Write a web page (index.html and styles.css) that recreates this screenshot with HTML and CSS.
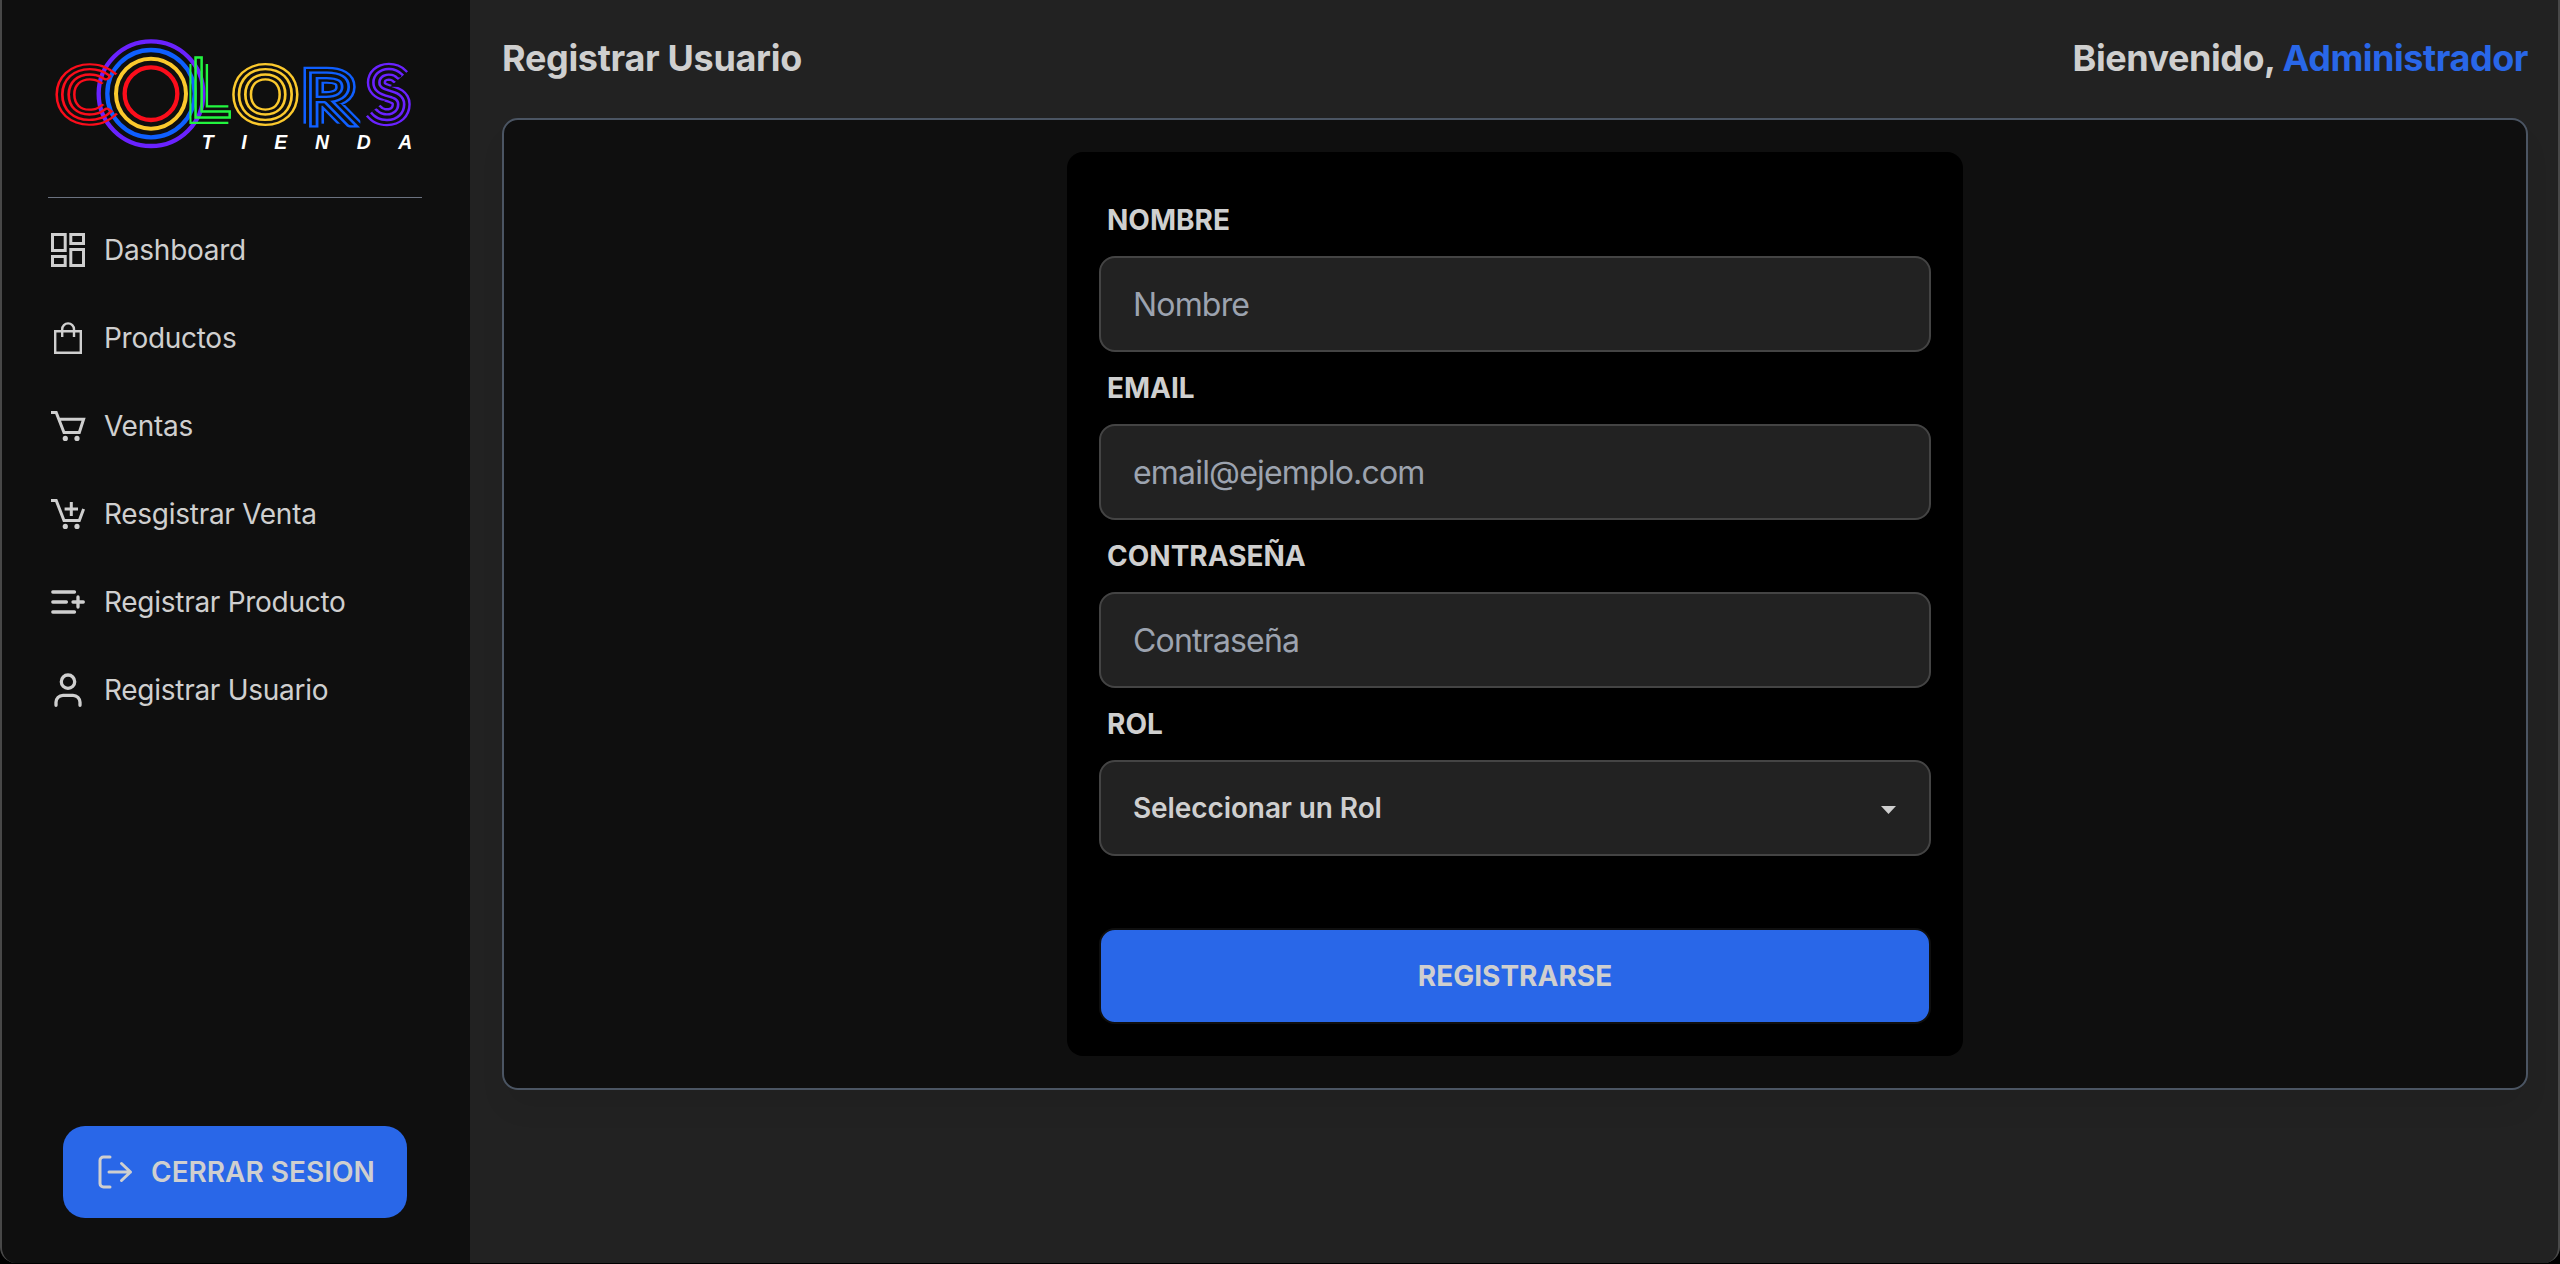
FILE: index.html
```html
<!DOCTYPE html>
<html lang="es">
<head>
<meta charset="utf-8">
<title>Registrar Usuario</title>
<link rel="stylesheet" href="styles.css">
</head>
<body>
<div class="window">
  <aside class="sidebar">
    <svg class="logo" viewBox="144 96 1122 369" role="img" aria-label="Colors Tienda">
      <defs>
        <!-- Each mask cuts the thick stroke of a letter into four parallel stripes -->
        <mask id="stripes-c" maskUnits="userSpaceOnUse" x="100" y="90" width="1200" height="380">
          <rect class="keep" x="100" y="90" width="1200" height="380"/>
          <g class="glyph" transform="translate(256 351) scale(1.16 1)"><text class="cut wide">C</text><text class="add">C</text><text class="cut thin">C</text></g>
          <polygon class="hide" points="264,281 400,188 400,374"/>
        </mask>
        <mask id="stripes-l" maskUnits="userSpaceOnUse" x="100" y="90" width="1200" height="380">
          <rect class="keep" x="568" y="192" width="117" height="180"/>
          <g class="glyph glyph-l" transform="translate(567 346)"><text class="cut wide">L</text><text class="add">L</text><text class="cut thin">L</text></g>
        </mask>
        <mask id="stripes-o" maskUnits="userSpaceOnUse" x="100" y="90" width="1200" height="380">
          <rect class="keep" x="100" y="90" width="1200" height="380"/>
          <g class="glyph" transform="translate(796 351) scale(1.14 1)"><text class="cut wide">O</text><text class="add">O</text><text class="cut thin">O</text></g>
        </mask>
        <mask id="stripes-r" maskUnits="userSpaceOnUse" x="100" y="90" width="1200" height="380">
          <rect class="keep" x="909" y="180" width="172" height="191"/>
          <g class="glyph glyph-r" transform="translate(985 371) scale(1.2 1)"><text class="cut wide">R</text><text class="add">R</text><text class="cut thin">R</text></g>
        </mask>
        <mask id="stripes-s" maskUnits="userSpaceOnUse" x="100" y="90" width="1200" height="380">
          <rect class="keep" x="100" y="90" width="1200" height="380"/>
          <g class="glyph" transform="translate(1164 351) scale(1.06 1)"><text class="cut wide">S</text><text class="add">S</text><text class="cut thin">S</text></g>
          <polygon class="hide" points="1170,260 1240,200 1260,200 1260,262"/>
          <polygon class="hide" points="1156,302 1088,358 1070,358 1070,300"/>
        </mask>
      </defs>
      <g fill="none">
        <circle cx="453" cy="281" r="157" stroke="#6a22ff" stroke-width="13"/>
        <circle cx="453" cy="281" r="131" stroke="#0f5fff" stroke-width="13"/>
        <circle cx="453" cy="281" r="105" stroke="#fbc92d" stroke-width="12"/>
        <circle cx="453" cy="281" r="79" stroke="#fb0d1b" stroke-width="13"/>
      </g>
      <g mask="url(#stripes-c)"><g class="glyph" transform="translate(256 351) scale(1.16 1)"><text class="ink red">C</text></g></g>
      <g mask="url(#stripes-l)"><g class="glyph glyph-l" transform="translate(567 346)"><text class="ink green">L</text></g></g>
      <g mask="url(#stripes-o)"><g class="glyph" transform="translate(796 351) scale(1.14 1)"><text class="ink yellow">O</text></g></g>
      <g mask="url(#stripes-r)"><g class="glyph glyph-r" transform="translate(985 371) scale(1.2 1)"><text class="ink blue">R</text></g></g>
      <g mask="url(#stripes-s)"><g class="glyph" transform="translate(1164 351) scale(1.06 1)"><text class="ink violet">S</text></g></g>
      <text class="tagline" x="605" y="447" textLength="632">TIENDA</text>
    </svg>
    <nav class="menu">
      <a class="item"><svg class="icon" viewBox="0 0 40 40"><path d="M4.5 4.5H17.2V20.4H4.5zM22.8 4.5H35.5V13.5H22.8zM4.5 26.5H17.2V35.5H4.5zM22.8 19.6H35.5V35.5H22.8z"/></svg><span>Dashboard</span></a>
      <a class="item"><svg class="icon light" viewBox="0 0 40 40"><path d="M7.2 13.2H32.8V34.8H7.2zM14.2 19V11.3a5.9 5.9 0 0 1 11.8 0V19"/></svg><span>Productos</span></a>
      <a class="item"><svg class="icon" viewBox="0 0 40 40"><path d="M3 6.4H8.2L16 26.5H31.3L35.6 13.2H11.2"/><circle class="dot" cx="17.3" cy="32.4" r="2.6"/><circle class="dot" cx="29" cy="32.4" r="2.6"/></svg><span>Ventas</span></a>
      <a class="item"><svg class="icon" viewBox="0 0 40 40"><path d="M3 6.4H8.2L16 26.5H31.3L35.6 15M23.3 8V22M16.6 15H30"/><circle class="dot" cx="17.3" cy="32.4" r="2.6"/><circle class="dot" cx="29" cy="32.4" r="2.6"/></svg><span>Resgistrar Venta</span></a>
      <a class="item"><svg class="icon round" viewBox="0 0 40 40"><path d="M4.8 10H26.5M4.8 20H18.4M4.8 30H26.5M25 20H35.3M30 15V25"/></svg><span>Registrar Producto</span></a>
      <a class="item"><svg class="icon round" viewBox="0 0 40 40"><circle cx="20" cy="11.7" r="6.7"/><path d="M8 35.3V32.3a7 7 0 0 1 7-7H25a7 7 0 0 1 7 7V35.3"/></svg><span>Registrar Usuario</span></a>
    </nav>
    <button class="logout"><svg class="icon thin-line" viewBox="0 0 40 40"><path d="M15 5H8.500a3.500 3.500 0 0 0-3.500 3.500V31.500a3.500 3.500 0 0 0 3.500 3.500H15M14 20H35.500M26.500 11.500L35.500 20L26.500 28.500"/></svg><span>CERRAR SESION</span></button>
  </aside>
  <main class="main">
    <header class="topbar">
      <h1 class="heading title">Registrar Usuario</h1>
      <p class="heading welcome">Bienvenido, <span class="name">Administrador</span></p>
    </header>
    <section class="card">
      <form class="form">
        <label class="label" for="nombre">NOMBRE</label>
        <input class="field" id="nombre" type="text" placeholder="Nombre">
        <label class="label" for="email">EMAIL</label>
        <input class="field" id="email" type="text" placeholder="email@ejemplo.com">
        <label class="label" for="clave">CONTRASEÑA</label>
        <input class="field" id="clave" type="password" placeholder="Contraseña">
        <span class="label">ROL</span>
        <div class="field select"><span>Seleccionar un Rol</span><svg class="caret" viewBox="0 0 15 8"><path d="M0 0H15L7.500 8z"/></svg></div>
        <button class="submit" type="button"><span>REGISTRARSE</span></button>
      </form>
    </section>
  </main>
</div>
</body>
</html>
```
FILE: styles.css
```css
* { box-sizing: border-box; margin: 0; }
body {
  height: 1264px;
  overflow: hidden;
  background: #000;
  color: #cfcfcf;
  font-family: Inter, "Liberation Sans", sans-serif;
}
.window {
  display: flex;
  height: 1263px;
  overflow: hidden;
  background: #222;
  border: solid #484848;
  border-width: 0 2px;
  border-radius: 0 0 16px 16px;
}
.sidebar {
  display: flex;
  flex-direction: column;
  width: 468px;
  padding: 32px 48px 45px 46px;
  background: #0f0f0f;
}
.logo { display: block; width: 374px; height: 123px; overflow: visible; }
.glyph { font: 100 192px Lato, sans-serif; text-anchor: middle; }
.glyph text { vector-effect: non-scaling-stroke; }
.glyph-l { font-size: 236px; text-anchor: start; }
.glyph-r { font-size: 210px; }
.ink { stroke-width: 18px; }
.keep { fill: #fff; }
.hide { fill: #000; }
.cut { fill: #000; stroke: #000; }
.wide { stroke-width: 13.300px; }
.thin { stroke-width: 2.600px; }
.add { fill: #fff; stroke: #fff; stroke-width: 7.600px; }
.red { fill: #fb0d1b; stroke: #fb0d1b; }
.green { fill: #22f53f; stroke: #22f53f; }
.yellow { fill: #fbc92d; stroke: #fbc92d; }
.blue { fill: #0f5fff; stroke: #0f5fff; }
.violet { fill: #6a22ff; stroke: #6a22ff; }
.tagline { fill: #fff; font: italic bold 58px "Liberation Sans", sans-serif; }
.menu {
  display: flex;
  flex-direction: column;
  margin-top: 42px;
  padding-top: 8px;
  border-top: 1px solid #6b7280;
}
.item {
  display: flex;
  align-items: center;
  gap: 16px;
  height: 88px;
  font-size: 28px;
  letter-spacing: -.28px;
}
.icon { width: 40px; height: 40px; fill: none; stroke: #cfcfcf; stroke-width: 3; flex: none; }
.light { stroke-width: 2.4; }
.round { stroke-width: 3.3; stroke-linecap: round; }
.thin-line { stroke-width: 3; stroke-linecap: round; stroke-linejoin: round; }
.dot { fill: #cfcfcf; stroke: none; }
.logout {
  display: flex;
  align-items: center;
  gap: 16px;
  width: 344px;
  height: 92px;
  margin: auto 0 0 15px;
  padding: 0 0 0 32px;
  border: 0;
  border-radius: 22px;
  background: #2967e8;
  color: inherit;
  font: 600 28px Inter, sans-serif;
}
.main { flex: 1; padding: 0 30px 0 32px; }
.topbar {
  display: flex;
  justify-content: space-between;
  align-items: center;
  height: 118px;
  padding-bottom: 2px;
}
.heading { font-size: 36px; font-weight: 700; line-height: 44px; letter-spacing: -.32px; }
.welcome { letter-spacing: -.46px; }
.name { color: #2967e8; }
.card {
  display: flex;
  justify-content: center;
  padding: 32px;
  border: 2px solid #4b5563;
  border-radius: 16px;
  background: #0f0f0f;
  box-shadow: 0 20px 30px -5px rgba(0, 0, 0, .07);
}
.form {
  display: flex;
  flex-direction: column;
  width: 896px;
  padding: 32px;
  border-radius: 16px;
  background: #000;
}
.label { height: 72px; padding-left: 8px; font-size: 28px; font-weight: 700; line-height: 73px; }
.field {
  width: 100%;
  height: 96px;
  padding: 0 32px;
  border: 2px solid #444;
  border-radius: 16px;
  background: #222;
  color: inherit;
  font: 400 32px Inter, sans-serif;
  letter-spacing: -.82px;
}
.field::placeholder { color: #9ca3af; opacity: 1; }
.select {
  display: flex;
  align-items: center;
  justify-content: space-between;
  padding-right: 33px;
  font-size: 28px;
  font-weight: 600;
  letter-spacing: -.1px;
}
.caret { width: 15px; height: 8px; fill: #cfcfcf; margin-top: 4px; }
.submit {
  height: 96px;
  margin-top: 72px;
  border: 2px solid #0f0f0f;
  border-radius: 16px;
  background: #2967e8;
  color: inherit;
  font: 700 28px Inter, sans-serif;
}
```
